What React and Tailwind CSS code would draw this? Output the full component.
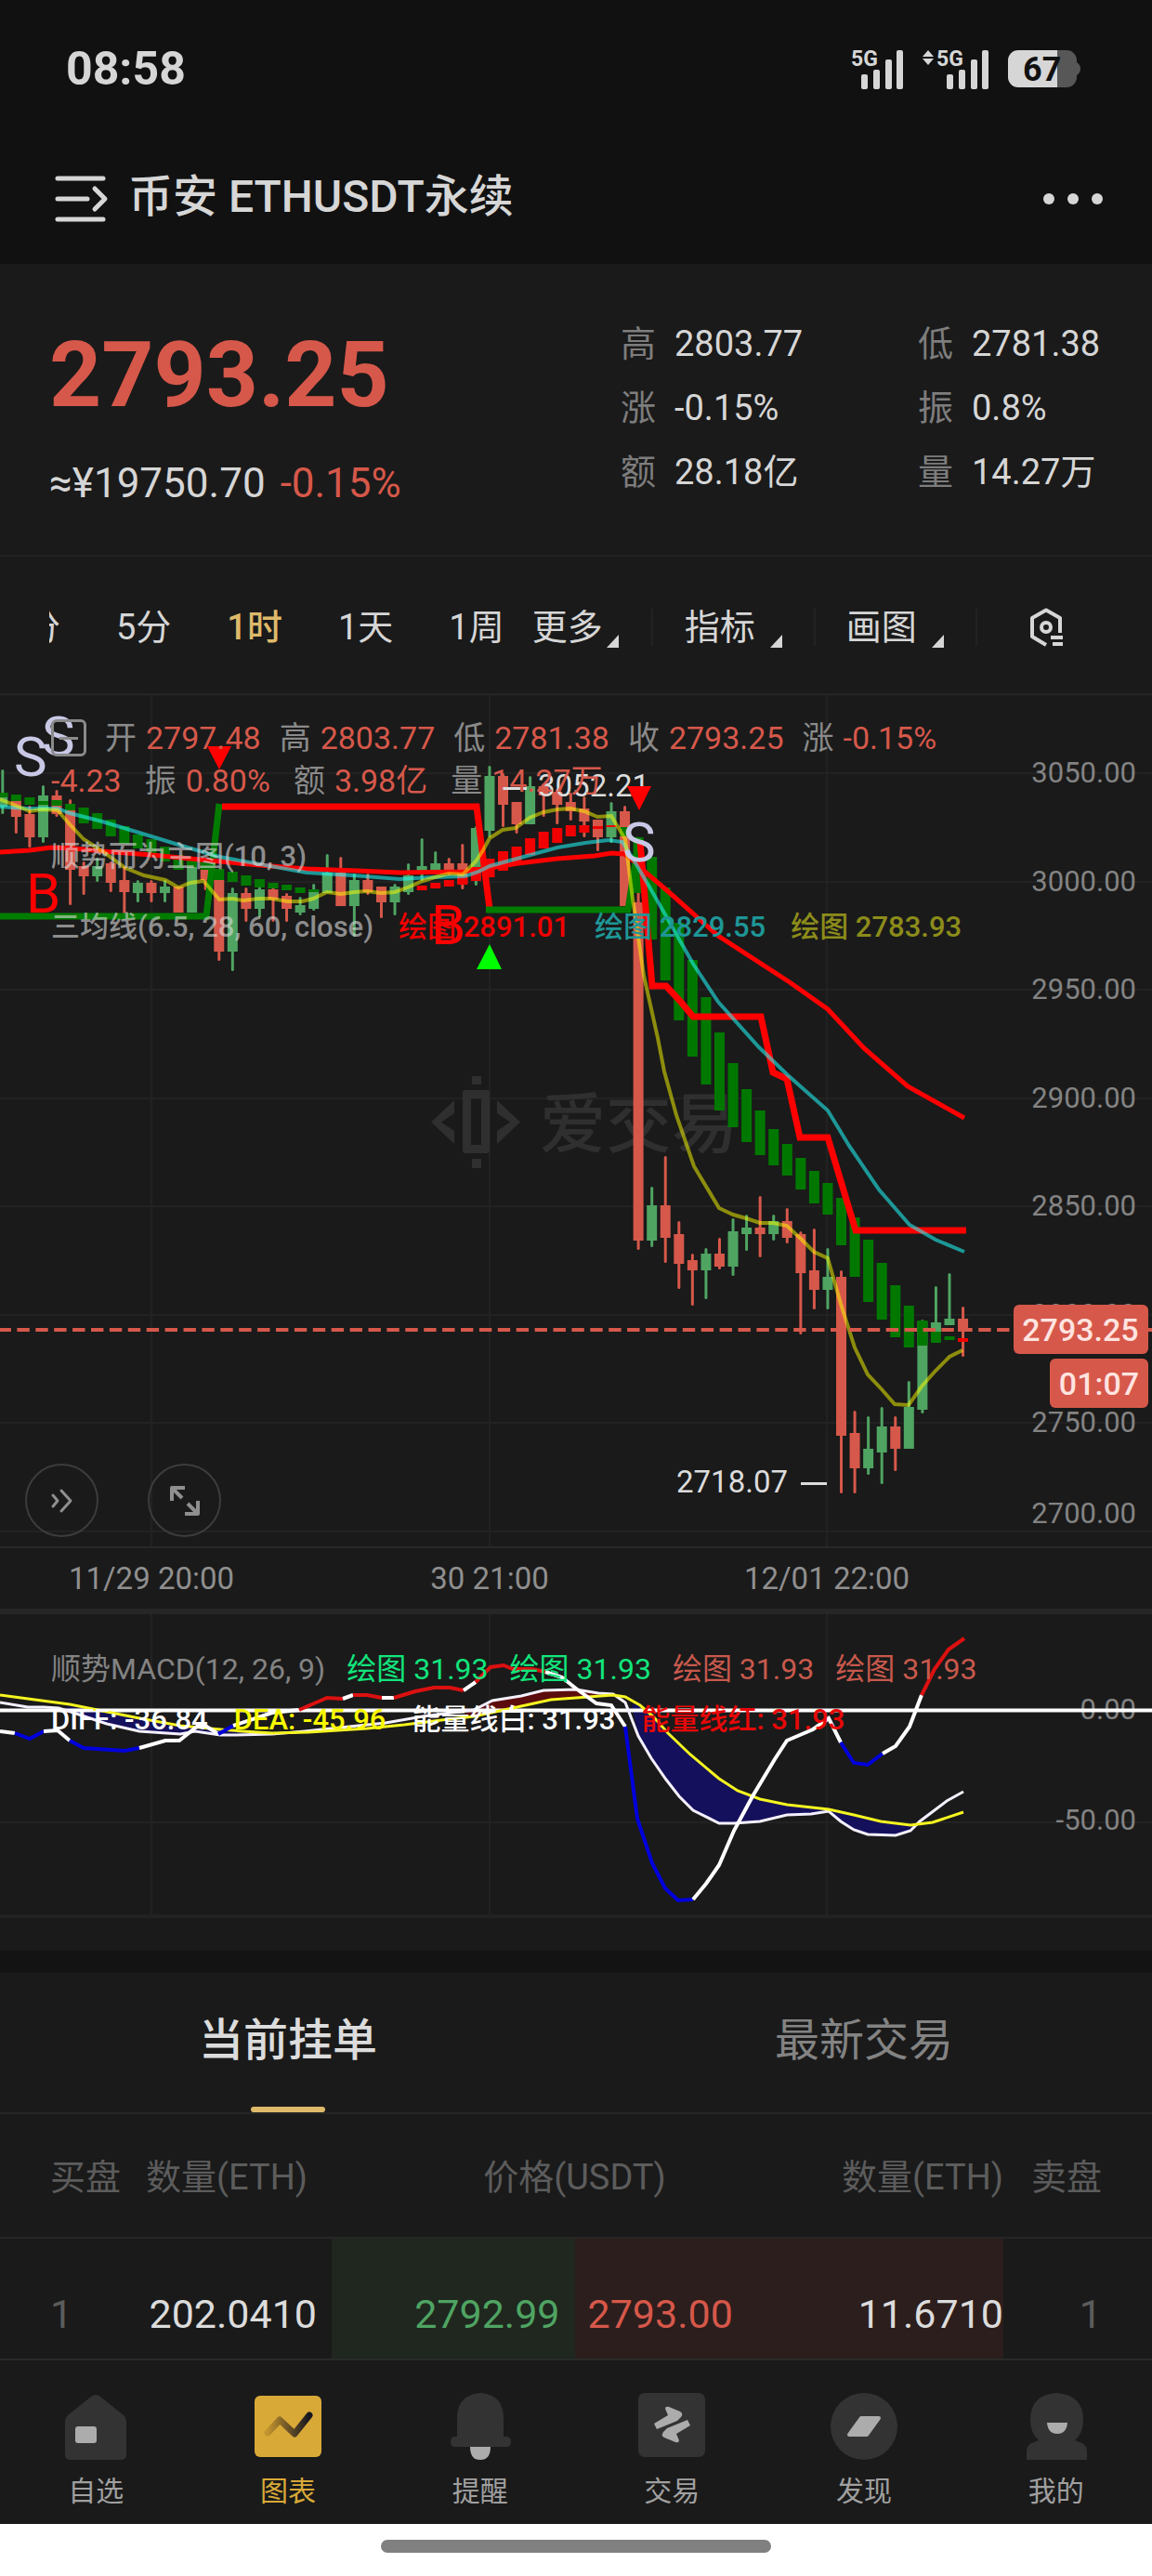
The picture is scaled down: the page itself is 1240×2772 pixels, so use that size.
import React, { useState } from 'react';

// up / down colours
const UP = '#4fa462';
const DOWN = '#d6584a';

// x position of candle number i
const STEP = 14.56;
const cx = (i) => 2.8 + i * STEP;

// [direction, high, body top, body bottom, low]
const candles = [
  [1, 828, 853, 868, 876], [0, 860, 861, 879, 897], [0, 867, 876, 901, 912], [1, 845, 856, 901, 907],
  [0, 850, 856, 876, 879], [0, 860, 872, 936, 974], [0, 927, 932, 943, 963], [1, 923, 932, 943, 949],
  [0, 927, 929, 950, 960], [0, 932, 947, 960, 990], [1, 947, 950, 961, 971], [0, 947, 950, 961, 971],
  [1, 947, 954, 961, 971], [0, 954, 954, 982, 982], [1, 922, 927, 982, 982], [0, 936, 936, 947, 958],
  [0, 943, 947, 1024, 1034], [1, 955, 961, 1024, 1045], [0, 955, 961, 978, 992], [1, 953, 957, 978, 987],
  [0, 955, 957, 968, 992], [0, 961, 964, 978, 992], [1, 965, 974, 982, 985], [1, 951, 957, 978, 980],
  [1, 919, 939, 961, 961], [0, 922, 939, 975, 975], [1, 940, 947, 975, 1008], [0, 940, 947, 960, 963],
  [0, 954, 954, 971, 988], [1, 951, 954, 971, 985], [1, 929, 942, 960, 963], [1, 902, 932, 941, 948],
  [1, 916, 929, 940, 940], [0, 923, 929, 940, 942], [0, 908, 929, 951, 957], [1, 889, 891, 945, 953],
  [1, 824, 835, 894, 901], [0, 832, 835, 866, 890], [0, 863, 863, 887, 897], [1, 835, 846, 887, 887],
  [0, 843, 846, 856, 879], [0, 849, 852, 866, 887], [0, 853, 863, 873, 883], [0, 857, 870, 884, 901],
  [0, 882, 882, 901, 916], [1, 863, 873, 901, 907], [0, 867, 873, 975, 975], [0, 960, 971, 1335, 1345],
  [1, 1277, 1297, 1335, 1342], [0, 1244, 1297, 1332, 1359], [0, 1314, 1328, 1360, 1387], [0, 1349, 1356, 1367, 1405],
  [1, 1343, 1349, 1367, 1398], [0, 1332, 1349, 1363, 1366], [1, 1311, 1325, 1363, 1373], [1, 1307, 1321, 1328, 1346],
  [0, 1287, 1321, 1328, 1353], [1, 1307, 1314, 1328, 1335], [0, 1300, 1314, 1332, 1338], [0, 1325, 1328, 1370, 1436],
  [0, 1322, 1367, 1388, 1409], [1, 1343, 1374, 1388, 1409], [0, 1367, 1374, 1545, 1607], [0, 1518, 1542, 1580, 1607],
  [1, 1524, 1559, 1580, 1587], [1, 1514, 1535, 1563, 1597], [0, 1524, 1535, 1559, 1583], [1, 1486, 1514, 1559, 1559],
  [1, 1420, 1422, 1517, 1521], [1, 1384, 1423, 1433, 1433], [1, 1370, 1419, 1426, 1426], [0, 1406, 1419, 1433, 1460],
];

// trend blocks: [candle, top, bottom]
const greenBlocks = [
  [0, 853, 858], [1, 855, 862], [2, 858, 866], [3, 862, 866], [4, 861, 867], [5, 865, 872], [6, 869, 886],
  [7, 875, 892], [8, 882, 900], [9, 889, 908], [10, 898, 913], [11, 903, 919], [12, 911, 927], [13, 920, 936],
  [14, 922, 933], [15, 925, 936], [16, 935, 947], [17, 938, 949], [18, 942, 953], [19, 946, 955], [20, 950, 956],
  [21, 952, 958], [22, 955, 961], [23, 957, 960], [46, 890, 900], [47, 901, 961], [48, 922, 1011],
  [49, 955, 1055], [50, 993, 1098], [51, 1033, 1137], [52, 1073, 1167], [53, 1111, 1195], [54, 1144, 1213],
  [55, 1172, 1229], [56, 1195, 1243], [57, 1215, 1254], [58, 1231, 1265], [59, 1246, 1280], [60, 1260, 1295],
  [61, 1273, 1307], [62, 1289, 1340], [63, 1310, 1374], [64, 1334, 1401], [65, 1359, 1420], [66, 1383, 1439],
  [67, 1405, 1450], [68, 1421, 1448], [69, 1433, 1445], [70, 1438, 1442],
];
const redBlocks = [
  [31, 953, 958], [32, 950, 956], [33, 947, 954], [34, 943, 952], [35, 933, 948], [36, 924, 944], [37, 916, 937],
  [38, 911, 928], [39, 902, 920], [40, 895, 913], [41, 891, 907], [42, 888, 900], [43, 888, 896], [44, 889, 892],
  [45, 888, 890], [71, 1440, 1444],
];

const ma60 =
  '0,917 32,915 55,912 80,913 110,916 163,920 236,927 280,931 330,935 385,937 430,939 500,938 527,934 558,929 600,924 640,921 658,918 672,919 687,930 693,937 720,960 773,1007 850,1057 891,1086 930,1128 977,1169 1038,1203';
const ma28 =
  '0,868 30,870 62,870 75,875 110,884 163,900 192,909 236,922 280,930 330,939 380,942 430,946 465,944 500,943 515,938 527,932 560,923 600,912 630,907 655,904 670,906 680,922 700,956 746,1037 773,1078 817,1127 848,1157 891,1195 914,1233 946,1280 979,1318 1007,1334 1038,1347';
const ma6 =
  '0,860 15,866 32,873 45,871 62,872 75,887 90,903 110,916 135,934 155,942 178,947 192,955 205,950 219,948 236,968 250,967 262,969 278,967 292,967 310,970 325,970 337,967 352,960 367,962 381,960 395,959 410,961 425,960 439,955 455,948 468,944 483,940 498,941 512,927 520,915 527,902 541,893 555,891 570,880 585,874 600,871 614,870 629,873 643,879 658,878 673,903 680,960 693,1050 708,1117 715,1153 728,1200 747,1255 774,1300 789,1307 803,1311 818,1316 832,1316 847,1319 862,1333 876,1347 891,1354 905,1403 920,1450 934,1479 949,1495 963,1511 978,1512 992,1492 1007,1475 1022,1460 1036,1453';

// MACD fast and slow lines
const diff =
  '0,1832 30,1837 47,1837 63,1838 79,1843 115,1855 150,1863 194,1866 210,1863 237,1867 253,1867 293,1866 328,1863 356,1860 415,1854 455,1847 510,1840 530,1830 561,1825 585,1819 620,1818 644,1822 660,1823 673,1832 687,1868 701,1892 717,1915 731,1933 746,1948 774,1962 790,1962 818,1960 847,1953 873,1952 892,1949 905,1960 919,1969 934,1974 964,1975 980,1970 990,1960 1019,1938 1037,1928';
const dea =
  '0,1824 30,1828 75,1834 105,1840 150,1849 194,1857 237,1861 261,1863 293,1865 332,1864 395,1860 435,1856 475,1851 510,1847 561,1836 593,1829 620,1827 660,1824 673,1826 689,1835 703,1847 719,1865 743,1888 774,1914 794,1927 818,1936 847,1942 892,1947 919,1953 948,1960 980,1964 1004,1961 1037,1950';

// energy line, split where its colour changes
const energy = [
  ['#ffffff', '0,1863 16,1865'],
  ['#0000dc', '16,1865 32,1871 47,1863'],
  ['#ffffff', '47,1863 62,1862 75,1873'],
  ['#0000dc', '75,1873 90,1881 134,1884 150,1881'],
  ['#ffffff', '150,1881 178,1873 193,1873 212,1858 221,1857 235,1866'],
  ['#0000dc', '235,1866 251,1857'],
  ['#ffffff', '251,1857 293,1843 322,1840'],
  ['#dc1010', '322,1840 352,1827 369,1828'],
  ['#ffffff', '369,1828 380,1824'],
  ['#dc1010', '380,1824 395,1824 411,1827'],
  ['#ffffff', '411,1827 424,1827'],
  ['#dc1010', '424,1827 447,1820 467,1816 484,1816 499,1819'],
  ['#ffffff', '499,1819 512,1810'],
  ['#dc1010', '512,1810 528,1794 542,1792 552,1796 573,1796 587,1799'],
  ['#ffffff', '587,1799 605,1805 620,1817 642,1833 658,1835 673,1858'],
  ['#0000dc', '673,1858 686,1957 702,2005 716,2032 730,2045 746,2044'],
  ['#ffffff', '746,2044 760,2027 774,2007 790,1970 810,1933 834,1893 847,1873 861,1867 875,1861 892,1849 905,1875'],
  ['#0000dc', '905,1875 919,1897 934,1899 950,1887'],
  ['#ffffff', '950,1887 964,1879 979,1858 992,1824'],
  ['#dc1010', '992,1824 1006,1796 1021,1775 1038,1763'],
];

const priceAxis = [
  ['3050.00', 832, 842], ['3000.00', 949, 959], ['2950.00', 1065, 1075], ['2900.00', 1182, 1192],
  ['2850.00', 1298, 1308], ['2800.00', 1415, 1425], ['2750.00', 1531, 1541], ['2700.00', 1648, 1639],
];
const timeAxis = [['11/29 20:00', 163], ['30 21:00', 527], ['12/01 22:00', 890]];

const quote = [
  [['高', '2803.77'], ['低', '2781.38']],
  [['涨', '-0.15%'], ['振', '0.8%']],
  [['额', '28.18亿'], ['量', '14.27万']],
];

const periods = ['5分', '1时', '1天', '1周'];

function Signal({ arrows }) {
  return (
    <svg viewBox="0 -6 72 56" className="h-14 w-[72px]" fill="#d6d6d6" aria-hidden="true">
      {arrows && <path d="M6 2l6 7H0zM6 18l6-7H0z" />}
      <text x="15" y="19" fontSize="23" fontWeight="700">5G</text>
      <rect x="26" y="28" width="7" height="16" rx="2" />
      <rect x="39" y="23" width="7" height="21" rx="2" />
      <rect x="52" y="12" width="7" height="32" rx="2" />
      <rect x="64" y="2" width="7" height="42" rx="2" />
    </svg>
  );
}

function StatusBar() {
  return (
    <div className="flex h-[148px] items-center justify-between pr-[77px] pl-[71px]">
      <span className="text-[50px] leading-none font-bold text-[#d6d6d6]">08:58</span>
      <div className="flex items-center">
        <Signal />
        <div className="ml-5"><Signal arrows /></div>
        <svg viewBox="0 -4 78 48" className="ml-5 h-12 w-[78px]" role="img" aria-label="67%">
          <path d="M11 0h52a11 11 0 0 1 11 11v2q4 3 4 7t-4 7v2a11 11 0 0 1-11 11H53V0z" fill="#575757" />
          <path d="M11 0h42v40H11A11 11 0 0 1 0 29V11A11 11 0 0 1 11 0z" fill="#d6d6d6" />
          <text x="16" y="33" fontSize="36" fontWeight="700" fill="#111111">67</text>
        </svg>
      </div>
    </div>
  );
}

function Header() {
  return (
    <header className="flex h-[136px] items-center pr-[52px] pb-1 pl-[59px]">
      <button aria-label="菜单">
        <svg viewBox="0 0 58 50" className="h-[50px] w-[58px]" fill="none" stroke="#d6d6d6" strokeWidth="5" strokeLinecap="round" strokeLinejoin="round">
          <path d="M3 3h49M3 25h32M3 47h49M43 14l11 11-11 11" />
        </svg>
      </button>
      <h1 className="ml-[21px] pb-1 text-[48px] leading-none font-medium text-[#d6d6d6]">币安 ETHUSDT永续</h1>
      <button aria-label="更多选项" className="ml-auto">
        <svg viewBox="0 0 66 14" className="h-[14px] w-[66px]" fill="#d6d6d6">
          <circle cx="7" cy="7" r="6" />
          <circle cx="33" cy="7" r="6" />
          <circle cx="59" cy="7" r="6" />
        </svg>
      </button>
    </header>
  );
}

function Quote() {
  return (
    <section className="flex h-[313px] justify-between pr-[54px] pl-[53px]">
      <div className="pt-[70px]">
        <div className="text-[98px] leading-[100px] font-bold text-[#d6584a]">2793.25</div>
        <div className="mt-[42px] flex gap-4 text-[44px] leading-[48px]">
          <span className="text-[#d6d6d6]">≈¥19750.70</span>
          <span className="text-[#d6584a]">-0.15%</span>
        </div>
      </div>
      <div className="w-[518px] pt-[52px]">
        {quote.map((row, i) => (
          <dl key={i} className="flex h-[69px] items-center justify-between text-[38px]">
            {row.map(([label, value]) => (
              <div key={label} className="flex w-[198px] items-center gap-5 whitespace-nowrap">
                <dt className="text-[#7d7d7d]">{label}</dt>
                <dd className="text-[#d6d6d6]">{value}</dd>
              </div>
            ))}
          </dl>
        ))}
      </div>
    </section>
  );
}

function Corner() {
  return (
    <svg viewBox="0 0 13 14" className="h-[14px] w-[13px]" fill="#d6d6d6" aria-hidden="true">
      <path d="M13 0v14H0z" />
    </svg>
  );
}

function Toolbar() {
  const [active, setActive] = useState('1时');
  return (
    <nav className="flex h-[149px] items-center border-t-2 border-[#222222] pt-1 pl-[53px] text-[38px] leading-[44px] text-[#d6d6d6]">
      <button aria-label="1分" className="flex w-3 shrink-0 justify-end overflow-hidden whitespace-nowrap">1分</button>
      {periods.map((p) => (
        <button
          key={p}
          onClick={() => setActive(p)}
          className={p === active ? 'ml-[60px] font-medium whitespace-nowrap text-[#deb96a]' : 'ml-[60px] whitespace-nowrap'}
        >
          {p}
        </button>
      ))}
      <button className="ml-[30px] flex items-end gap-1 whitespace-nowrap">更多<Corner /></button>
      <span className="ml-[35px] h-10 w-[2px] bg-[#222222]" />
      <button className="ml-[34px] flex items-end gap-4 whitespace-nowrap">指标<Corner /></button>
      <span className="ml-[34px] h-10 w-[2px] bg-[#222222]" />
      <button className="ml-[33px] flex items-end gap-4 whitespace-nowrap">画图<Corner /></button>
      <span className="ml-[34px] h-10 w-[2px] bg-[#222222]" />
      <button aria-label="设置" className="ml-[56px]">
        <svg viewBox="0 0 38 42" className="h-[42px] w-[38px]" fill="none" stroke="#d6d6d6" strokeWidth="4">
          <path d="M18 40L3 31V11L18 2.500l15 8.500V27" strokeLinejoin="round" />
          <circle cx="18" cy="21" r="5" />
          <path d="M23 32h13M25 39h11" />
        </svg>
      </button>
    </nav>
  );
}

function LegendPair({ label, value }) {
  return (
    <span className="flex gap-[10px]">
      <span className="text-[#8a8a8a]">{label}</span>
      <span className="text-[#d6584a]">{value}</span>
    </span>
  );
}

function PriceChart() {
  return (
    <section className="relative">
      <svg viewBox="0 746 1240 989" className="block w-full" role="img" aria-label="K线图">
        <g stroke="#222222" strokeWidth="2">
          {priceAxis.map(([label, y]) => <path key={label} d={`M0 ${y}H1240`} />)}
          {timeAxis.map(([label, x]) => <path key={label} d={`M${x} 748V1665`} />)}
          <path d="M0 1665H1240" stroke="#282828" />
        </g>
        <path d="M0 747H1240" stroke="#242424" strokeWidth="3" />
        <path d="M0 1733.500H1240" stroke="#262626" strokeWidth="5" />

        {/* watermark */}
        <g fill="#2f2f2f">
          <path d="M489 1184v14l-14 9.500 14 9.500v14l-25-23.500zM535 1184v14l14 9.500-14 9.500v14l25-23.500z" />
          <path d="M501 1173h23q3 0 3 3v62q0 3-3 3h-23q-3 0-3-3v-62q0-3 3-3zM507 1182v50h11v-50z" fillRule="evenodd" />
          <path d="M508 1158h10v9h-10zM508 1247h10v10h-10z" />
          <text x="581" y="1234" fontSize="71" fontWeight="500">爱交易</text>
        </g>

        <g fill="#838383" fontSize="31" textAnchor="end">
          {priceAxis.map(([label, , y]) => <text key={label} x="1223" y={y}>{label}</text>)}
        </g>
        <g fill="#8f8f8f" fontSize="33" textAnchor="middle">
          {timeAxis.map(([label, x]) => <text key={label} x={x} y="1710">{label}</text>)}
        </g>

        {candles.map(([up, high, top, bottom, low], i) => (
          <g key={i} fill={up ? UP : DOWN}>
            <rect x={cx(i) - 1.5} y={high} width="3" height={low - high} rx="1.5" />
            <rect x={cx(i) - 5.5} y={top} width="11" height={bottom - top} />
          </g>
        ))}
        {greenBlocks.map(([i, top, bottom]) => (
          <rect key={i} x={cx(i) - 5.5} y={top} width="11" height={bottom - top} fill="#007800" />
        ))}
        {redBlocks.map(([i, top, bottom]) => (
          <rect key={i} x={cx(i) - 5.5} y={top} width="11" height={bottom - top} fill="#f00000" />
        ))}

        {/* stop line */}
        <g fill="none" strokeWidth="7">
          <path d="M0 986H222L236 865" stroke="#007d00" />
          <path d="M239 868H513L527 978" stroke="#ff0000" />
          <path d="M523 979H676L688 901" stroke="#007d00" />
          <path d="M689 905L702 1061H717L731 1076L746 1094H819L832 1154L847 1161L861 1224H891L921 1324H1040" stroke="#ff0000" />
        </g>

        <g fill="none">
          <polyline points={ma60} stroke="#ff0000" strokeWidth="5" />
          <polyline points={ma28} stroke="#20ffff" strokeOpacity="0.55" strokeWidth="4" />
          <polyline points={ma6} stroke="#ffff00" strokeOpacity="0.5" strokeWidth="4" />
        </g>

        <path d="M0 1431H1240" stroke={DOWN} strokeWidth="4" strokeDasharray="13.400 6.500" strokeDashoffset="1.500" />

        {/* highest and lowest price */}
        <g fill="#dcdcdc" fontSize="33">
          <path d="M541 847h26v3h-26zM862 1595h28v3h-28z" />
          <text x="579" y="857">3052.21</text>
          <text x="848" y="1606" textAnchor="end">2718.07</text>
        </g>

        {/* buy and sell marks */}
        <path d="M223 803h26l-13 25zM675 846h26l-13 26z" fill="#ff0000" />
        <path d="M513 1043h27l-13-27z" fill="#00ff00" />
        <g fontSize="60" fill="#c8c8e6">
          <text x="15" y="835">S</text>
          <text x="45" y="813">S</text>
          <text x="670" y="927">S</text>
        </g>
        <g fontSize="60" fill="#ff0000">
          <text x="28" y="982">B</text>
          <text x="464" y="1016">B</text>
        </g>

        <g fontSize="34" fontWeight="500" fill="#ffe4e0">
          <rect x="1091" y="1404" width="145" height="53" rx="6" fill={DOWN} />
          <text x="1163" y="1443" textAnchor="middle">2793.25</text>
          <rect x="1130" y="1462" width="106" height="53" rx="6" fill={DOWN} />
          <text x="1183" y="1501" textAnchor="middle">01:07</text>
        </g>
      </svg>

      <div className="absolute top-[25px] left-[55px] text-[34px] leading-[46px] whitespace-nowrap">
        <div className="flex items-center gap-5">
          <button aria-label="收起" className="flex h-10 w-[38px] items-center justify-center rounded-md border-[3px] border-[#8a8a8a]">
            <span className="h-[3px] w-5 bg-[#8a8a8a]" />
          </button>
          <LegendPair label="开" value="2797.48" />
          <LegendPair label="高" value="2803.77" />
          <LegendPair label="低" value="2781.38" />
          <LegendPair label="收" value="2793.25" />
          <LegendPair label="涨" value="-0.15%" />
        </div>
        <div className="flex items-center gap-[25px]">
          <span className="text-[#d6584a]">-4.23</span>
          <LegendPair label="振" value="0.80%" />
          <LegendPair label="额" value="3.98亿" />
          <LegendPair label="量" value="14.27万" />
        </div>
      </div>
      <div className="absolute top-[153px] left-[55px] text-[31px] leading-[46px] font-medium text-[#dcdcdc]/60">
        顺势而为主图(10, 3)
      </div>
      <div className="absolute top-[229px] left-[55px] flex gap-[27px] text-[31px] leading-[46px] font-medium whitespace-nowrap">
        <span className="text-[#dcdcdc]/60">三均线(6.5, 28, 60, close)</span>
        <span className="text-[#f00000]">绘图 2891.01</span>
        <span className="text-[#1e9696]">绘图 2829.55</span>
        <span className="text-[#8c8c1a]">绘图 2783.93</span>
      </div>

      <div className="absolute bottom-[81px] left-[27px] flex gap-[53px]">
        <button aria-label="最新" className="flex size-[79px] items-center justify-center rounded-full border-2 border-[#3c3c3c]">
          <svg viewBox="0 0 26 28" className="h-7 w-[26px]" fill="none" stroke="#8f8f8f" strokeWidth="3" strokeLinecap="round" strokeLinejoin="round">
            <path d="M3 8l5 6-5 6M12 3l10 11-10 11" />
          </svg>
        </button>
        <button aria-label="全屏" className="flex size-[79px] items-center justify-center rounded-full border-2 border-[#3c3c3c]">
          <svg viewBox="0 0 34 34" className="size-[34px]" fill="none" stroke="#8f8f8f" strokeWidth="4" strokeLinejoin="round">
            <path d="M3 17V3h14M4 4l10 10M31 17v14H17M30 30L20 20" />
          </svg>
        </button>
      </div>
    </section>
  );
}

function MacdChart() {
  return (
    <section className="relative">
      <svg viewBox="0 1735 1240 364" className="block w-full" role="img" aria-label="MACD">
        <path d="M0 1736H1240" stroke="#262626" strokeWidth="2" />
        <g stroke="#222222" strokeWidth="2">
          <path d="M0 1961H1240" />
          {timeAxis.map(([label, x]) => <path key={label} d={`M${x} 1737V2061`} />)}
        </g>
        <path d="M0 2062H1240" stroke="#222222" strokeWidth="4" />
        <g fill="#838383" fontSize="31" textAnchor="end">
          <text x="1223" y="1850">0.00</text>
          <text x="1223" y="1969">-50.00</text>
        </g>

        <path d="M70 1836L105 1840 150 1849 194 1857 237 1861 293 1865V1867L237 1867 210 1864 194 1866 150 1863 115 1855 79 1843z" fill="#15105c" />
        <path d="M500 1844L510 1840 530 1830 561 1825 585 1819 620 1818 644 1822 660 1823 620 1827 593 1829 561 1836 510 1847z" fill="#5c0c0c" />
        <path d="M680 1834L689 1835 703 1847 719 1865 743 1888 774 1914 794 1927 818 1936 847 1942 892 1947 919 1953 948 1960 985 1964 980 1970 964 1975 934 1974 919 1969 905 1960 892 1949 847 1953 818 1960 774 1962 746 1948 731 1933 717 1915 701 1892 687 1868z" fill="#15105c" />

        <g fill="none" strokeWidth="3">
          <path d="M0 1840.500H1240" stroke="#ffffff" strokeWidth="4" />
          <polyline points={diff} stroke="#f4f0ff" />
          <polyline points={dea} stroke="#f5f520" />
          {energy.map(([color, points]) => <polyline key={points} points={points} stroke={color} strokeWidth="4" />)}
        </g>
      </svg>

      <div className="absolute top-[38px] left-[55px] flex gap-[23px] text-[32px] leading-[46px] whitespace-nowrap">
        <span className="text-[#838383]">顺势MACD(12, 26, 9)</span>
        <span className="text-[#12e57c]">绘图 31.93</span>
        <span className="text-[#12e57c]">绘图 31.93</span>
        <span className="text-[#c8594c]">绘图 31.93</span>
        <span className="text-[#c8594c]">绘图 31.93</span>
      </div>
      <div className="absolute top-[93px] left-[55px] flex gap-[28px] text-[31px] leading-[46px] font-medium whitespace-nowrap">
        <span className="text-white">DIFF: -36.84</span>
        <span className="text-[#f8f800]">DEA: -45.96</span>
        <span className="text-white">能量线白: 31.93</span>
        <span className="text-[#e80808]">能量线红: 31.93</span>
      </div>
    </section>
  );
}

function OrderBook() {
  const [tab, setTab] = useState('当前挂单');
  return (
    <section className="border-t-[24px] border-[#131313]">
      <div role="tablist" className="grid h-[152px] grid-cols-2 border-b-2 border-[#262626] text-[48px] leading-[48px]">
        {['当前挂单', '最新交易'].map((t) => (
          <button
            key={t}
            role="tab"
            aria-selected={t === tab}
            onClick={() => setTab(t)}
            className={t === tab ? 'relative pb-1 font-medium text-[#dcdcdc]' : 'relative pb-1 text-[#838383]'}
          >
            {t}
            {t === tab && <span className="absolute bottom-0 left-1/2 h-[6px] w-20 -translate-x-1/2 rounded-full bg-[#deb96a]" />}
          </button>
        ))}
      </div>
      <table className="w-full table-fixed border-collapse">
        <colgroup>
          <col className="w-[157px]" />
          <col className="w-[200px]" />
          <col />
          <col />
          <col className="w-[200px]" />
          <col className="w-[160px]" />
        </colgroup>
        <thead>
          <tr className="h-[133px] border-b-2 border-[#262626] text-[38px] whitespace-nowrap text-[#5c5c5c]">
            <th className="p-0 pt-1 pl-[54px] text-left font-normal">买盘</th>
            <th className="p-0 pt-1 text-left font-normal">数量(ETH)</th>
            <th colSpan={2} className="p-0 pt-1 text-center font-normal">价格(USDT)</th>
            <th className="p-0 pt-1 text-right font-normal">数量(ETH)</th>
            <th className="p-0 pt-1 pr-[54px] text-right font-normal">卖盘</th>
          </tr>
        </thead>
        <tbody>
          <tr className="h-[130px] text-[43px] leading-[48px] text-[#dcdcdc]">
            <td className="p-0 pt-8 pl-[54px] text-[#5c5c5c]">1</td>
            <td className="p-0 pt-8 pr-4 text-right">202.0410</td>
            <td className="bg-[#1f271f] p-0 pt-8 pr-4 text-right text-[#4fa462]">2792.99</td>
            <td className="bg-[#2c1e1c] p-0 pt-8 pl-[14px] text-[#d6584a]">2793.00</td>
            <td className="bg-[#2c1e1c] p-0 pt-8 text-right">11.6710</td>
            <td className="p-0 pt-8 pr-[54px] text-right text-[#5c5c5c]">1</td>
          </tr>
        </tbody>
      </table>
    </section>
  );
}

const tabs = [
  {
    label: '自选',
    icon: (
      <>
        <path d="M31 4q5-4 10 0l25 20q3 3 3 7v35q0 6-6 6H9q-6 0-6-6V31q0-4 3-7z" fill="#333333" />
        <rect x="14" y="36" width="23" height="18" rx="3" fill="#acacac" />
      </>
    ),
  },
  {
    label: '图表',
    icon: (
      <>
        <defs>
          <linearGradient id="trend" x1="0" x2="1" y1="0" y2="0">
            <stop offset="0" stopColor="#c3942f" />
            <stop offset="0.500" stopColor="#6b5226" />
            <stop offset="1" stopColor="#15161f" />
          </linearGradient>
        </defs>
        <rect y="3" width="72" height="66" rx="6" fill="#d9a938" />
        <path d="M14 43l13-14 16 15 16-20" fill="none" stroke="url(#trend)" strokeWidth="7" strokeLinecap="round" strokeLinejoin="round" />
      </>
    ),
  },
  {
    label: '提醒',
    icon: (
      <>
        <path d="M36 0q25 2 25 27v20h3q5 0 5 5.500T64 58H9q-5 0-5-5.500T9 47h2V27Q11 2 36 0z" fill="#333333" />
        <path d="M25 58h22q0 14-11 14T25 58z" fill="#acacac" />
      </>
    ),
  },
  {
    label: '交易',
    icon: (
      <>
        <rect width="72" height="69" rx="7" fill="#333333" />
        <path d="M17 33l15-9-3-7q0-3 4-2l12 5q4 2 1 6l-4 4-22 9z" fill="#acacac" />
        <path d="M56 35l-15 9 3 7q0 3-4 2l-12-5q-4-2-1-6l4-4 22-9z" fill="#acacac" />
      </>
    ),
  },
  {
    label: '发现',
    icon: (
      <>
        <circle cx="36" cy="36" r="36" fill="#333333" />
        <path d="M33 27h19L39 45H20z" fill="#acacac" stroke="#acacac" strokeWidth="4" strokeLinejoin="round" />
      </>
    ),
  },
  {
    label: '我的',
    icon: (
      <>
        <path d="M36 0q29 2 29 29 0 14-9 22l8 3q5 3 5 9v9H4v-9q0-6 5-9l8-3Q8 43 8 29 8 2 36 0z" fill="#333333" />
        <path d="M26 32h22q-1 12-11 12T26 32z" fill="#acacac" />
      </>
    ),
  },
];

function TabBar() {
  return (
    <nav className="grid h-[178px] grid-cols-6 border-t-2 border-[#2a2a2a]">
      {tabs.map(({ label, icon }) => (
        <a key={label} href="#" className="flex flex-col items-center pt-[35px]">
          <svg viewBox="0 0 72 72" className="size-[72px]" aria-hidden="true">{icon}</svg>
          <span className={label === '图表' ? 'mt-4 text-[30px] leading-[36px] text-[#d9a938]' : 'mt-4 text-[30px] leading-[36px] text-[#a0a0a0]'}>
            {label}
          </span>
        </a>
      ))}
    </nav>
  );
}

export default function App() {
  return (
    <div className="bg-[#1a1a1a] font-[Roboto,'Noto_Sans_CJK_SC',sans-serif]">
      <div className="bg-[#111111]">
        <StatusBar />
        <Header />
      </div>
      <Quote />
      <Toolbar />
      <PriceChart />
      <MacdChart />
      <OrderBook />
      <TabBar />
      {/* gesture bar */}
      <div className="flex h-14 justify-center bg-white pt-[17px]">
        <div className="h-[14px] w-[420px] rounded-full bg-[#808080]" />
      </div>
    </div>
  );
}
